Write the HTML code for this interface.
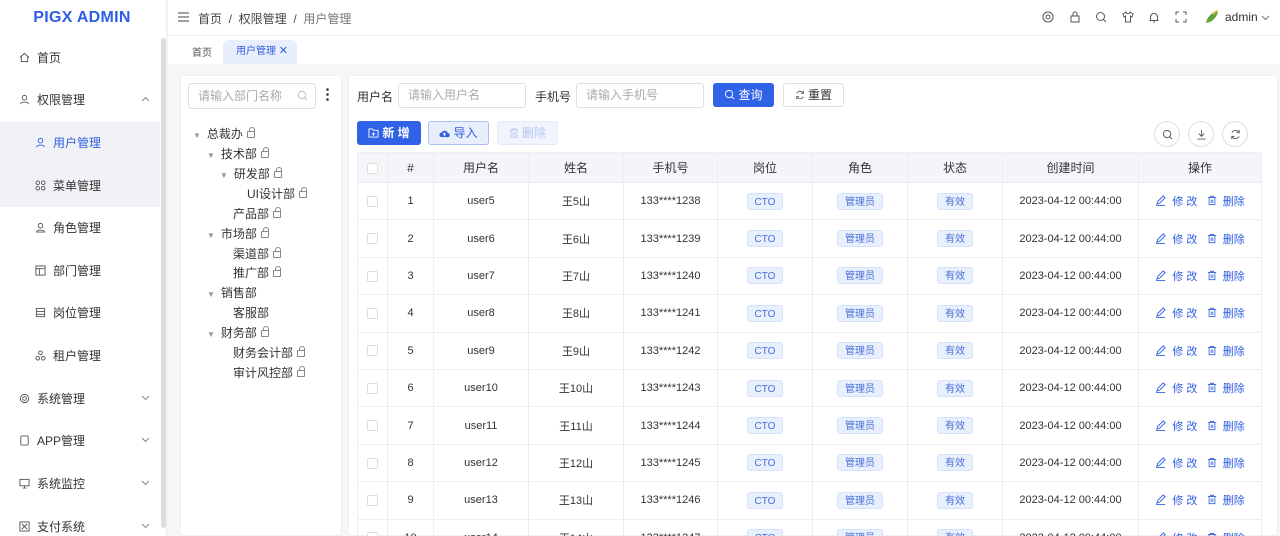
<!DOCTYPE html>
<html style="overflow:hidden;width:1280px;height:536px"><head><meta charset="utf-8"><style>
*{box-sizing:border-box;margin:0;padding:0}
body{width:1280px;height:536px;overflow:hidden;font-family:"Liberation Sans","Noto Sans CJK SC",sans-serif;font-size:12px;color:#333;background:#f5f6f8;position:relative}
.side{position:absolute;left:0;top:0;width:167px;height:536px;background:#fff;border-right:1px solid #eee}
.logo{height:36px;line-height:36px;text-align:center;color:#2f5ee6;font-weight:bold;font-size:16px;letter-spacing:.3px;padding-right:2px}
.mi{position:absolute;left:0;width:160px;height:42px;line-height:42px;font-size:12px;color:#333;padding-left:37px}
.mi .ic{position:absolute;left:19px;top:15px;width:11px;height:11px}
.mi.sub{padding-left:53px}.mi.sub .ic{left:35px}
.mi .ar{position:absolute;right:10px;top:17px;width:9px;height:6px}
.scroll{position:absolute;left:161px;top:38px;width:5px;height:490px;background:#ddd;border-radius:3px}
.hdr{position:absolute;left:168px;top:0;right:0;height:36px;background:#fff;border-bottom:1px solid #f0f0f0}
.tabs{position:absolute;left:168px;top:36px;right:0;height:28px;background:#fff}
.card{position:absolute;background:#fff;border:1px solid #eef0f3;border-radius:3px}
.inp{position:absolute;height:25px;border:1px solid #dcdfe6;border-radius:3px;color:#aaa;font-size:12px;line-height:23px;padding-left:9px;background:#fff}
.btn{position:absolute;height:24px;border-radius:3px;line-height:24px;font-size:12px;text-align:center}
.btn svg{vertical-align:-1px;margin-right:3px}
table{position:absolute;left:357px;top:152px;border-collapse:collapse;font-size:11px}
td,th{border:1px solid #ebeef5;text-align:center;height:37.4px;padding:0}
th{background:#f3f5f9;height:30px;font-weight:normal;color:#333;font-size:12px}
.cb{display:inline-block;width:11px;height:11px;border:1px solid #ddd;border-radius:2px;background:#fff;vertical-align:middle}
.tag{display:inline-block;height:17px;line-height:17px;padding:0 7px;background:#e8effd;border:1px solid #d6e2fb;border-radius:3px;color:#4a6fd6;font-size:10px}
.op{color:#3060e0;font-size:11px;white-space:nowrap}
.op svg{vertical-align:-1px}
.tree div{position:absolute;font-size:12px;color:#333;white-space:nowrap}
.tri{color:#999;font-size:8px;margin-right:6px}
.lk{display:inline-block;width:8px;height:7px;border:1px solid #888;border-radius:1px;margin-left:4px;position:relative;top:0}
.lk:before{content:"";position:absolute;left:1px;top:-5px;width:4px;height:4px;border:1px solid #888;border-bottom:none;border-radius:3px 3px 0 0}
.rc{position:absolute;top:121px;width:26px;height:26px;border:1px solid #ddd;border-radius:50%}
.rc svg{position:absolute;left:7px;top:7px}
.hi{position:absolute;top:11px;width:12px;height:12px}
</style></head><body>
<div class="side">
<div class="logo">PIGX ADMIN</div>
<div style="position:absolute;left:0;top:122px;width:160px;height:85px;background:#f0f2f5"></div>
<div class="mi" style="top:37px"><svg class="ic" viewBox="0 0 12 12" fill="none" stroke="#555"><path d="M1 6L6 1.5 11 6M2.5 5v5.5h7V5"/></svg>首页</div>
<div class="mi" style="top:79px"><svg class="ic" viewBox="0 0 12 12" fill="none" stroke="#555"><circle cx="6" cy="4" r="2.5"/><path d="M1.5 11c1-3 8-3 9 0"/></svg>权限管理<svg class="ar" viewBox="0 0 9 6" fill="none" stroke="#888"><path d="M1 5l3.5-3.5L8 5"/></svg></div>
<div class="mi sub" style="top:122px;color:#3060e0"><svg class="ic" viewBox="0 0 12 12" fill="none" stroke="#3060e0"><circle cx="6" cy="4" r="2.5"/><path d="M1.5 11c1-3 8-3 9 0"/></svg>用户管理</div>
<div class="mi sub" style="top:165px"><svg class="ic" viewBox="0 0 12 12" fill="none" stroke="#555"><circle cx="3" cy="3" r="2"/><circle cx="9" cy="3" r="2"/><circle cx="3" cy="9" r="2"/><circle cx="9" cy="9" r="2"/></svg>菜单管理</div>
<div class="mi sub" style="top:207px"><svg class="ic" viewBox="0 0 12 12" fill="none" stroke="#555"><circle cx="6" cy="4" r="2.5"/><path d="M1.5 11h9c-1-3-8-3-9 0"/></svg>角色管理</div>
<div class="mi sub" style="top:250px"><svg class="ic" viewBox="0 0 12 12" fill="none" stroke="#555"><rect x="1" y="1" width="10" height="10"/><path d="M1 4h10M5 4v7"/></svg>部门管理</div>
<div class="mi sub" style="top:292px"><svg class="ic" viewBox="0 0 12 12" fill="none" stroke="#555"><rect x="1.5" y="1.5" width="9" height="9"/><path d="M1.5 5h9M1.5 8h9"/></svg>岗位管理</div>
<div class="mi sub" style="top:335px"><svg class="ic" viewBox="0 0 12 12" fill="none" stroke="#555"><circle cx="6" cy="3" r="2"/><circle cx="3" cy="9" r="2"/><circle cx="9" cy="9" r="2"/></svg>租户管理</div>
<div class="mi" style="top:378px"><svg class="ic" viewBox="0 0 12 12" fill="none" stroke="#555"><circle cx="6" cy="6" r="4.5"/><circle cx="6" cy="6" r="2"/></svg>系统管理<svg class="ar" viewBox="0 0 9 6" fill="none" stroke="#888"><path d="M1 1l3.5 3.5L8 1"/></svg></div>
<div class="mi" style="top:420px"><svg class="ic" viewBox="0 0 12 12" fill="none" stroke="#555"><rect x="2" y="1" width="8" height="10" rx="1"/></svg>APP管理<svg class="ar" viewBox="0 0 9 6" fill="none" stroke="#888"><path d="M1 1l3.5 3.5L8 1"/></svg></div>
<div class="mi" style="top:463px"><svg class="ic" viewBox="0 0 12 12" fill="none" stroke="#555"><rect x="1" y="1.5" width="10" height="7"/><path d="M4 11h4M6 8.5v2.5"/></svg>系统监控<svg class="ar" viewBox="0 0 9 6" fill="none" stroke="#888"><path d="M1 1l3.5 3.5L8 1"/></svg></div>
<div class="mi" style="top:506px"><svg class="ic" viewBox="0 0 12 12" fill="none" stroke="#555"><rect x="1" y="1" width="10" height="10"/><path d="M3 3l6 6M9 3L3 9"/></svg>支付系统<svg class="ar" viewBox="0 0 9 6" fill="none" stroke="#888"><path d="M1 1l3.5 3.5L8 1"/></svg></div>
<div class="scroll"></div>
</div>
<div class="hdr">
<svg style="position:absolute;left:10px;top:12px" width="11" height="10" viewBox="0 0 11 10" stroke="#444"><path d="M0 1h11M0 5h11M0 9h11"/></svg>
<div style="position:absolute;left:30px;top:10px;font-size:12px;color:#444">首页 &nbsp;/ &nbsp;权限管理 &nbsp;/ &nbsp;<span style="color:#777">用户管理</span></div>
<svg class="hi" style="left:874px" viewBox="0 0 12 12" fill="none" stroke="#555"><circle cx="6" cy="6" r="5"/><circle cx="6" cy="6" r="2"/></svg>
<svg class="hi" style="left:901px" viewBox="0 0 12 12" fill="none" stroke="#555"><rect x="2" y="5" width="8" height="6"/><path d="M4 5V3a2 2 0 014 0v2"/></svg>
<svg class="hi" style="left:927px" viewBox="0 0 12 12" fill="none" stroke="#555"><circle cx="5.5" cy="5.5" r="4"/><path d="M8.5 8.5l2.5 2.5"/></svg>
<svg class="hi" style="left:954px" viewBox="0 0 12 12" fill="none" stroke="#555"><path d="M4 1L1 3l1 3 1.5-1V11h5V5L10 6l1-3-3-2c0 1-1 1.5-2 1.5S4 2 4 1z"/></svg>
<svg class="hi" style="left:980px" viewBox="0 0 12 12" fill="none" stroke="#555"><path d="M2.5 9.5V6a3.5 3.5 0 017 0v3.5zM1.5 9.5h9M5 11h2"/></svg>
<svg class="hi" style="left:1007px" viewBox="0 0 12 12" fill="none" stroke="#555"><path d="M1 4V1h3M8 1h3v3M11 8v3H8M4 11H1V8"/></svg>
<svg style="position:absolute;left:1036px;top:9px" width="16" height="16" viewBox="0 0 16 16"><path d="M2 14C3 8 8 3 14 2c-1 6-5 11-12 12z" fill="#5aa43a"/><path d="M9 5c2-2 4-3 5-3" stroke="#e2b93b" stroke-width="2"/></svg>
<div style="position:absolute;left:1057px;top:10px;font-size:12px;color:#333">admin</div>
<svg style="position:absolute;left:1093px;top:15px" width="9" height="6" viewBox="0 0 9 6" fill="none" stroke="#777"><path d="M1 1l3.5 3.5L8 1"/></svg>
</div>
<div class="tabs">
<div style="position:absolute;left:24px;top:8px;font-size:10px;color:#555">首页</div>
<div style="position:absolute;left:55px;top:4px;width:74px;height:24px;background:#e8eefc;border-radius:5px 5px 0 0;color:#3060e0;font-size:10px;line-height:22px;padding-left:13px">用户管理 <span style="font-size:11px">✕</span></div>
</div>
<div class="card" style="left:180px;top:75px;width:162px;height:461px">
<div class="inp" style="left:7px;top:7px;width:128px;height:26px;line-height:24px">请输入部门名称</div>
<svg style="position:absolute;left:116px;top:14px" width="11" height="11" viewBox="0 0 12 12" fill="none" stroke="#bbb"><circle cx="5.5" cy="5.5" r="4"/><path d="M8.5 8.5l2.5 2.5"/></svg>
<svg style="position:absolute;left:145px;top:12px" width="3" height="13" viewBox="0 0 3 13" fill="#333"><circle cx="1.5" cy="1.5" r="1.3"/><circle cx="1.5" cy="6.5" r="1.3"/><circle cx="1.5" cy="11.5" r="1.3"/></svg>
</div>
<div class="tree">
<div style="left:193px;top:125px"><span class="tri">▼</span>总裁办<span class="lk"></span></div>
<div style="left:207px;top:145px"><span class="tri">▼</span>技术部<span class="lk"></span></div>
<div style="left:220px;top:165px"><span class="tri">▼</span>研发部<span class="lk"></span></div>
<div style="left:247px;top:185px">UI设计部<span class="lk"></span></div>
<div style="left:233px;top:205px">产品部<span class="lk"></span></div>
<div style="left:207px;top:225px"><span class="tri">▼</span>市场部<span class="lk"></span></div>
<div style="left:233px;top:245px">渠道部<span class="lk"></span></div>
<div style="left:233px;top:264px">推广部<span class="lk"></span></div>
<div style="left:207px;top:284px"><span class="tri">▼</span>销售部</div>
<div style="left:233px;top:304px">客服部</div>
<div style="left:207px;top:324px"><span class="tri">▼</span>财务部<span class="lk"></span></div>
<div style="left:233px;top:344px">财务会计部<span class="lk"></span></div>
<div style="left:233px;top:364px">审计风控部<span class="lk"></span></div>
</div>
<div class="card" style="left:348px;top:75px;width:930px;height:461px"></div>
<div style="position:absolute;left:357px;top:88px;font-size:12px">用户名</div>
<div class="inp" style="left:398px;top:83px;width:128px">请输入用户名</div>
<div style="position:absolute;left:535px;top:88px;font-size:12px">手机号</div>
<div class="inp" style="left:576px;top:83px;width:128px">请输入手机号</div>
<div class="btn" style="left:713px;top:83px;width:61px;background:#2f62e6;color:#fff"><svg width="11" height="11" viewBox="0 0 12 12" fill="none" stroke="#fff"><circle cx="5.5" cy="5.5" r="4"/><path d="M8.5 8.5l2.5 2.5"/></svg>查询</div>
<div class="btn" style="left:783px;top:83px;width:61px;border:1px solid #dcdfe6;color:#333;line-height:22px"><svg width="10" height="10" viewBox="0 0 12 12" fill="none" stroke="#555"><path d="M10 4A4.5 4.5 0 002 4M2 8a4.5 4.5 0 008 0M10 1v3H7M2 11V8h3"/></svg>重置</div>
<div class="btn" style="left:357px;top:121px;width:64px;background:#2f62e6;color:#fff;font-weight:bold"><svg width="11" height="10" viewBox="0 0 12 11" fill="none" stroke="#fff"><path d="M1 1h4l1 1.5h5V10H1zM6 4.5v4M4 6.5h4"/></svg>新 增</div>
<div class="btn" style="left:428px;top:121px;width:61px;background:#e8eefc;border:1px solid #aac0f2;color:#3060e0;line-height:22px"><svg width="11" height="9" viewBox="0 0 12 9"><path d="M3 8.5a2.5 2.5 0 010-5 3.5 3.5 0 016.5 0.5 2 2 0 010 4.5z" fill="#3060e0"/><path d="M6 7.5V4M4.5 5.5L6 4l1.5 1.5" stroke="#fff" fill="none"/></svg>导入</div>
<div class="btn" style="left:497px;top:121px;width:61px;background:#f0f4fd;border:1px solid #e3eafa;color:#b5c6ef;line-height:22px"><svg width="10" height="10" viewBox="0 0 12 12" fill="none" stroke="#b5c6ef"><path d="M1 2.5h10M4 2.5V1h4v1.5M2.5 2.5V11h7V2.5M5 5v4M7 5v4"/></svg>删除</div>
<div class="rc" style="left:1154px"><svg width="11" height="11" viewBox="0 0 12 12" fill="none" stroke="#555"><circle cx="5.5" cy="5.5" r="4"/><path d="M8.5 8.5l2.5 2.5"/></svg></div>
<div class="rc" style="left:1188px"><svg width="11" height="11" viewBox="0 0 12 12" fill="none" stroke="#555"><path d="M6 1v7M3 5l3 3 3-3M1.5 11h9"/></svg></div>
<div class="rc" style="left:1222px"><svg width="11" height="11" viewBox="0 0 12 12" fill="none" stroke="#555"><path d="M10 4A4.5 4.5 0 002 4M2 8a4.5 4.5 0 008 0M10 1v3H7M2 11V8h3"/></svg></div>
<table>
<tr><th style="width:30px"><span class="cb"></span></th><th style="width:46px">#</th><th style="width:95px">用户名</th><th style="width:95px">姓名</th><th style="width:94px">手机号</th><th style="width:95px">岗位</th><th style="width:95px">角色</th><th style="width:95px">状态</th><th style="width:136px">创建时间</th><th style="width:123px">操作</th></tr>
<tr><td><span class="cb"></span></td><td>1</td><td>user5</td><td>王5山</td><td>133****1238</td><td><span class="tag">CTO</span></td><td><span class="tag">管理员</span></td><td><span class="tag">有效</span></td><td>2023-04-12 00:44:00</td><td class="op"><svg width="11" height="11" viewBox="0 0 12 12" fill="none" stroke="#3060e0"><path d="M2 10l1-3 6-6 2 2-6 6zM1 11.5h10"/></svg>&nbsp; 修 改 &nbsp; <svg width="10" height="11" viewBox="0 0 12 12" fill="none" stroke="#3060e0"><path d="M1 2.5h10M4 2.5V1h4v1.5M2.5 2.5V11h7V2.5M5 5v4M7 5v4"/></svg>&nbsp; 删除</td></tr>
<tr><td><span class="cb"></span></td><td>2</td><td>user6</td><td>王6山</td><td>133****1239</td><td><span class="tag">CTO</span></td><td><span class="tag">管理员</span></td><td><span class="tag">有效</span></td><td>2023-04-12 00:44:00</td><td class="op"><svg width="11" height="11" viewBox="0 0 12 12" fill="none" stroke="#3060e0"><path d="M2 10l1-3 6-6 2 2-6 6zM1 11.5h10"/></svg>&nbsp; 修 改 &nbsp; <svg width="10" height="11" viewBox="0 0 12 12" fill="none" stroke="#3060e0"><path d="M1 2.5h10M4 2.5V1h4v1.5M2.5 2.5V11h7V2.5M5 5v4M7 5v4"/></svg>&nbsp; 删除</td></tr>
<tr><td><span class="cb"></span></td><td>3</td><td>user7</td><td>王7山</td><td>133****1240</td><td><span class="tag">CTO</span></td><td><span class="tag">管理员</span></td><td><span class="tag">有效</span></td><td>2023-04-12 00:44:00</td><td class="op"><svg width="11" height="11" viewBox="0 0 12 12" fill="none" stroke="#3060e0"><path d="M2 10l1-3 6-6 2 2-6 6zM1 11.5h10"/></svg>&nbsp; 修 改 &nbsp; <svg width="10" height="11" viewBox="0 0 12 12" fill="none" stroke="#3060e0"><path d="M1 2.5h10M4 2.5V1h4v1.5M2.5 2.5V11h7V2.5M5 5v4M7 5v4"/></svg>&nbsp; 删除</td></tr>
<tr><td><span class="cb"></span></td><td>4</td><td>user8</td><td>王8山</td><td>133****1241</td><td><span class="tag">CTO</span></td><td><span class="tag">管理员</span></td><td><span class="tag">有效</span></td><td>2023-04-12 00:44:00</td><td class="op"><svg width="11" height="11" viewBox="0 0 12 12" fill="none" stroke="#3060e0"><path d="M2 10l1-3 6-6 2 2-6 6zM1 11.5h10"/></svg>&nbsp; 修 改 &nbsp; <svg width="10" height="11" viewBox="0 0 12 12" fill="none" stroke="#3060e0"><path d="M1 2.5h10M4 2.5V1h4v1.5M2.5 2.5V11h7V2.5M5 5v4M7 5v4"/></svg>&nbsp; 删除</td></tr>
<tr><td><span class="cb"></span></td><td>5</td><td>user9</td><td>王9山</td><td>133****1242</td><td><span class="tag">CTO</span></td><td><span class="tag">管理员</span></td><td><span class="tag">有效</span></td><td>2023-04-12 00:44:00</td><td class="op"><svg width="11" height="11" viewBox="0 0 12 12" fill="none" stroke="#3060e0"><path d="M2 10l1-3 6-6 2 2-6 6zM1 11.5h10"/></svg>&nbsp; 修 改 &nbsp; <svg width="10" height="11" viewBox="0 0 12 12" fill="none" stroke="#3060e0"><path d="M1 2.5h10M4 2.5V1h4v1.5M2.5 2.5V11h7V2.5M5 5v4M7 5v4"/></svg>&nbsp; 删除</td></tr>
<tr><td><span class="cb"></span></td><td>6</td><td>user10</td><td>王10山</td><td>133****1243</td><td><span class="tag">CTO</span></td><td><span class="tag">管理员</span></td><td><span class="tag">有效</span></td><td>2023-04-12 00:44:00</td><td class="op"><svg width="11" height="11" viewBox="0 0 12 12" fill="none" stroke="#3060e0"><path d="M2 10l1-3 6-6 2 2-6 6zM1 11.5h10"/></svg>&nbsp; 修 改 &nbsp; <svg width="10" height="11" viewBox="0 0 12 12" fill="none" stroke="#3060e0"><path d="M1 2.5h10M4 2.5V1h4v1.5M2.5 2.5V11h7V2.5M5 5v4M7 5v4"/></svg>&nbsp; 删除</td></tr>
<tr><td><span class="cb"></span></td><td>7</td><td>user11</td><td>王11山</td><td>133****1244</td><td><span class="tag">CTO</span></td><td><span class="tag">管理员</span></td><td><span class="tag">有效</span></td><td>2023-04-12 00:44:00</td><td class="op"><svg width="11" height="11" viewBox="0 0 12 12" fill="none" stroke="#3060e0"><path d="M2 10l1-3 6-6 2 2-6 6zM1 11.5h10"/></svg>&nbsp; 修 改 &nbsp; <svg width="10" height="11" viewBox="0 0 12 12" fill="none" stroke="#3060e0"><path d="M1 2.5h10M4 2.5V1h4v1.5M2.5 2.5V11h7V2.5M5 5v4M7 5v4"/></svg>&nbsp; 删除</td></tr>
<tr><td><span class="cb"></span></td><td>8</td><td>user12</td><td>王12山</td><td>133****1245</td><td><span class="tag">CTO</span></td><td><span class="tag">管理员</span></td><td><span class="tag">有效</span></td><td>2023-04-12 00:44:00</td><td class="op"><svg width="11" height="11" viewBox="0 0 12 12" fill="none" stroke="#3060e0"><path d="M2 10l1-3 6-6 2 2-6 6zM1 11.5h10"/></svg>&nbsp; 修 改 &nbsp; <svg width="10" height="11" viewBox="0 0 12 12" fill="none" stroke="#3060e0"><path d="M1 2.5h10M4 2.5V1h4v1.5M2.5 2.5V11h7V2.5M5 5v4M7 5v4"/></svg>&nbsp; 删除</td></tr>
<tr><td><span class="cb"></span></td><td>9</td><td>user13</td><td>王13山</td><td>133****1246</td><td><span class="tag">CTO</span></td><td><span class="tag">管理员</span></td><td><span class="tag">有效</span></td><td>2023-04-12 00:44:00</td><td class="op"><svg width="11" height="11" viewBox="0 0 12 12" fill="none" stroke="#3060e0"><path d="M2 10l1-3 6-6 2 2-6 6zM1 11.5h10"/></svg>&nbsp; 修 改 &nbsp; <svg width="10" height="11" viewBox="0 0 12 12" fill="none" stroke="#3060e0"><path d="M1 2.5h10M4 2.5V1h4v1.5M2.5 2.5V11h7V2.5M5 5v4M7 5v4"/></svg>&nbsp; 删除</td></tr>
<tr><td><span class="cb"></span></td><td>10</td><td>user14</td><td>王14山</td><td>133****1247</td><td><span class="tag">CTO</span></td><td><span class="tag">管理员</span></td><td><span class="tag">有效</span></td><td>2023-04-12 00:44:00</td><td class="op"><svg width="11" height="11" viewBox="0 0 12 12" fill="none" stroke="#3060e0"><path d="M2 10l1-3 6-6 2 2-6 6zM1 11.5h10"/></svg>&nbsp; 修 改 &nbsp; <svg width="10" height="11" viewBox="0 0 12 12" fill="none" stroke="#3060e0"><path d="M1 2.5h10M4 2.5V1h4v1.5M2.5 2.5V11h7V2.5M5 5v4M7 5v4"/></svg>&nbsp; 删除</td></tr>
</table>
</body></html>
